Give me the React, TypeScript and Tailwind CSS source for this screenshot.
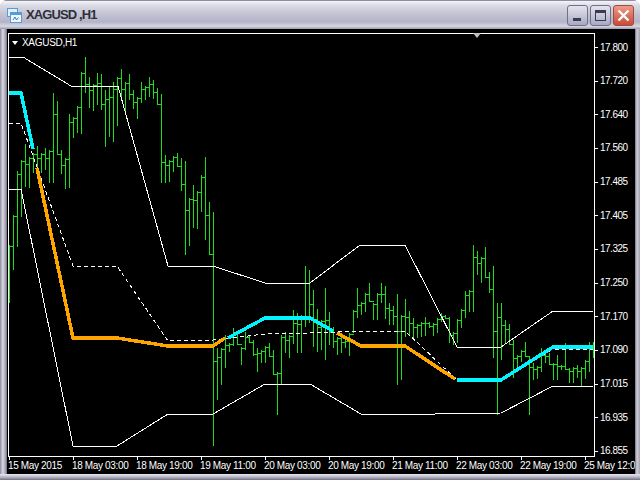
// [high, low] in screen px, one bar every 4px starting at x=9
const bars: [number, number][] = [
  [245, 303], [215, 270], [171, 247], [160, 217], [144, 187], [157, 188], [153, 173], [146, 170],
  [153, 173], [148, 170], [150, 183], [93, 183], [101, 155], [150, 174], [158, 189], [114, 188],
  [117, 138], [106, 133], [72, 134], [57, 93], [77, 108], [84, 111], [73, 105], [74, 110],
  [90, 147], [87, 137], [82, 142], [77, 126], [69, 97], [82, 113], [74, 100], [90, 109],
  [97, 119], [82, 103], [86, 100], [77, 97], [80, 99], [88, 105], [94, 183], [155, 183],
  [160, 182], [156, 172], [153, 167], [158, 191], [161, 255], [198, 246], [185, 228], [191, 229],
  [175, 212], [157, 240], [202, 255], [212, 446], [348, 400], [348, 385], [335, 368], [343, 352],
  [328, 346], [335, 345], [347, 365], [332, 350], [335, 343], [340, 356], [348, 372], [350, 363],
  [346, 363], [343, 357], [350, 375], [372, 415], [335, 384], [332, 353], [335, 358], [310, 344],
  [313, 353], [315, 353], [266, 327], [270, 323], [290, 347], [309, 352], [320, 350], [288, 360],
  [312, 345], [327, 348], [337, 355], [333, 353], [340, 348], [333, 356], [310, 333], [288, 318],
  [302, 315], [293, 312], [283, 302], [303, 320], [293, 320], [283, 303], [286, 319], [303, 325],
  [306, 325], [294, 385], [315, 380], [299, 337], [311, 336], [318, 338], [324, 338], [322, 337],
  [317, 336], [322, 328], [323, 336], [318, 333], [313, 322], [315, 319], [317, 343], [332, 345],
  [319, 343], [309, 328], [291, 318], [290, 312], [245, 312], [251, 275], [257, 283], [247, 278],
  [272, 293], [266, 358], [303, 415], [303, 360], [320, 343], [324, 345], [340, 378], [355, 368],
  [350, 362], [342, 357], [357, 415], [363, 380], [366, 379], [348, 372], [353, 363], [353, 365],
  [363, 380], [355, 380], [365, 370], [343, 370], [368, 383], [367, 383], [365, 378], [367, 386],
  [360, 379], [342, 372], [342, 358],
];

const upperBand = "9,57 23,57 71,86 118,86 168,266 213,266 265,283 310,283 360,245 405,245 457,347 501,347 553,311 593,311";
const lowerBand = "9,189 21,189 73,446 117,446 168,414 213,414 265,384 310,384 361,414 435,414 501,413 553,386 593,386";
const midBand = "9,123 21,123 73,266 117,266 168,341 213,340 265,334 310,333 360,331 405,331 457,380 501,380 553,349 593,349";

const cyanParts = [
  "9,93 21,93 33,149",
  "228,338 265,318 310,318 333,331",
  "457,380 501,380 553,347 593,347",
];
const orangeParts = [
  "37,168 73,338 117,338 168,346 213,346 225,338",
  "337,333 361,346 405,346 455,379",
];

const priceLabels = [
  "17.800", "17.720", "17.640", "17.560", "17.485", "17.405", "17.325",
  "17.250", "17.170", "17.090", "17.015", "16.935", "16.855",
];

const timeLabels = [
  "15 May 2015", "18 May 03:00", "18 May 19:00", "19 May 11:00", "20 May 03:00",
  "20 May 19:00", "21 May 11:00", "22 May 03:00", "22 May 19:00", "25 May 12:00",
];

const closeOf = (i: number) => {
  const [h, l] = bars[i];
  const next = bars[i + 1] ?? bars[i];
  const c = next[0] + Math.floor((next[1] - next[0]) * 0.25);
  return Math.max(h + 1, Math.min(l - 1, c));
};

const Chart = () => (
  <svg viewBox="9 34 585 422" className="block w-[585px] h-[422px]" shapeRendering="crispEdges">
    {bars.map(([h, l], i) => {
      const x = 9.5 + i * 4;
      const close = closeOf(i) + 0.5;
      const open = (i > 0 ? closeOf(i - 1) : h + 10) + 0.5;
      return (
        <path
          key={i}
          d={`M${x} ${h}V${l}M${x - 2} ${open}H${x}M${x} ${close}H${x + 2}`}
          stroke="#1fdc1f"
          fill="none"
        />
      );
    })}
    <polyline points={upperBand} fill="none" stroke="#fff" />
    <polyline points={lowerBand} fill="none" stroke="#fff" />
    <polyline points={midBand} fill="none" stroke="#fff" strokeDasharray="4 3" />
    {cyanParts.map((p) => (
      <polyline key={p} points={p} fill="none" stroke="#00f5ff" strokeWidth="3.5" />
    ))}
    {orangeParts.map((p) => (
      <polyline key={p} points={p} fill="none" stroke="#ffa500" strokeWidth="3.5" />
    ))}
  </svg>
);

const App = () => {
  return (
    <div className="w-[640px] h-[480px] flex flex-col overflow-hidden rounded-t-[7px] bg-[#b4b4c6] font-['Liberation_Sans',sans-serif]">
      <div className="h-[29px] flex items-center border-t border-[#8f8fa3] bg-[linear-gradient(#f4f4f8_0%,#dcdce6_15%,#c4c4d4_45%,#b4b4c8_75%,#d8d8e2_90%,#9a9aae_100%)]">
        <svg viewBox="0 0 15 15" className="ml-[7px] w-[15px] h-[15px]">
          <rect x="0.5" y="0.5" width="10" height="8" fill="#dff0fb" stroke="#5b9bd5" />
          <rect x="3.5" y="4.5" width="11" height="10" fill="#eef7fd" stroke="#5b9bd5" />
          <rect x="4" y="5" width="10" height="2" fill="#5b9bd5" />
          <path d="M6 12l2-3 1.500 3 2-2.500" fill="none" stroke="#3b79b8" />
        </svg>
        <span className="ml-[4px] text-[13px] font-bold tracking-[-0.9px] text-[#2f2f3a]">XAGUSD ,H1</span>
        <div className="ml-auto mr-[6px] flex gap-[2px]">
          <div className="w-[21px] h-[21px] rounded-[3px] border border-[#70708a] bg-[linear-gradient(#e4e4ee,#a8a8c2)] flex items-end justify-center pb-[4px]">
            <div className="w-[8px] h-[3px] bg-[#3a3a55] mr-[2px]" />
          </div>
          <div className="w-[21px] h-[21px] rounded-[3px] border border-[#70708a] bg-[linear-gradient(#e4e4ee,#a8a8c2)] flex items-center justify-center">
            <div className="w-[11px] h-[11px] border border-t-[3px] border-[#3a3a55]" />
          </div>
          <div className="w-[21px] h-[21px] rounded-[3px] border border-[#a04a40] bg-[linear-gradient(#ee9a88,#c84a38)] flex items-center justify-center">
            <svg viewBox="0 0 13 13" className="w-[13px] h-[13px]">
              <path d="M1.5 1.5l10 10M11.5 1.5l-10 10" stroke="#fff" strokeWidth="2.4" />
            </svg>
          </div>
        </div>
      </div>

      <div className="flex flex-1 min-h-0">
        <div className="w-[7px] bg-[linear-gradient(90deg,#8a8a9c,#d8d8e2_40%,#b0b0c2_70%,#70707e)]" />
        <div className="w-[628px] bg-black text-white text-[10px] leading-none">
          <div className="flex pt-[4px] pl-px">
            <div className="relative border border-white w-[587px] h-[424px]">
              <Chart />
              <div className="absolute left-[3px] top-[4px] flex items-center gap-[4px] text-[10px] tracking-[-0.3px]">
                <span className="w-0 h-0 border-x-[3.5px] border-x-transparent border-t-[4px] border-t-white" />
                XAGUSD,H1
              </div>
              <span className="absolute left-[464px] -top-px w-0 h-0 border-x-[4px] border-x-transparent border-t-[5px] border-t-[#c0c0c0]" />
            </div>
            <div className="h-[424px] flex flex-col justify-between pt-[9px]">
              {priceLabels.map((p) => (
                <div key={p} className="h-[11px] flex items-center gap-[2px]">
                  <span className="w-[3px] h-px bg-white" />
                  <span className="tracking-[-0.5px]">{p}</span>
                </div>
              ))}
            </div>
          </div>
          <div className="flex pl-px overflow-hidden w-[628px]">
            {timeLabels.map((t) => (
              <div key={t} className="w-[64px] shrink-0 whitespace-nowrap">
                <div className="w-px h-[3px] bg-white ml-[1px]" />
                <div className="mt-[1px] tracking-[-0.35px]">{t}</div>
              </div>
            ))}
          </div>
        </div>
        <div className="w-[5px] bg-[linear-gradient(90deg,#70707e,#d0d0dc_40%,#a0a0b0)]" />
      </div>
      <div className="h-[6px] bg-[linear-gradient(#e8e8f0,#b8b8c8_50%,#707080)]" />
    </div>
  );
};

export default App;
